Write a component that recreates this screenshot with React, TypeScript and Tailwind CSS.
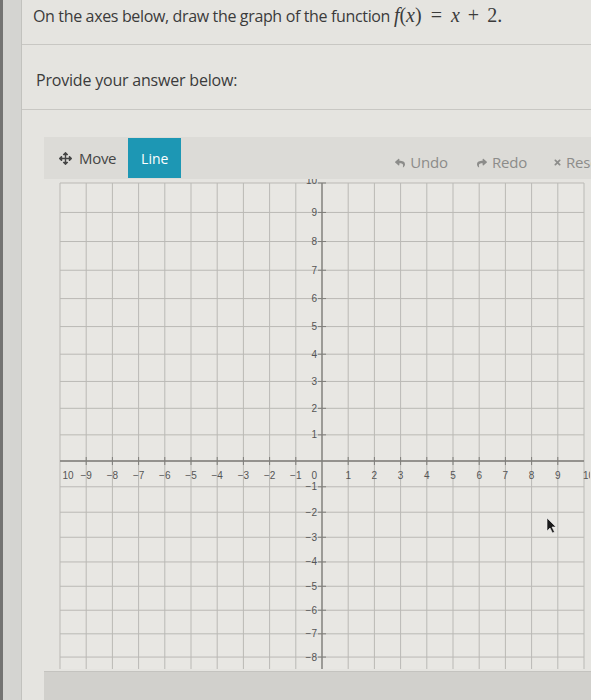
import React from "react";
import { FaArrowsAlt, FaReply, FaShare, FaTimes } from "react-icons/fa";

const OX = 45; // svg page offset x
const OY = 180; // svg page offset y
const W = 546;
const H = 492;

const xAt = (u: number) => 323 + 26.2 * u - OX;
const yAt = (v: number) => {
  const t = 10 - v;
  return 184 + 29.63 * t - 0.183 * t * t - OY;
};

function Grid() {
  const us = Array.from({ length: 21 }, (_, i) => i - 10);
  const vs = Array.from({ length: 19 }, (_, i) => 10 - i);
  const left = xAt(-10);
  const right = xAt(10);
  const top = yAt(10);
  const bottom = 490;
  const ax = xAt(0);
  const ay = yAt(0);
  return (
    <svg width={W} height={H} className="block" style={{ fontFamily: '"Liberation Sans", Arial, sans-serif' }}>
      <rect x={left} y={top} width={right - left} height={bottom - top} fill="#e8e7e3" />
      {us.map((u) => (
        <line key={"v" + u} x1={xAt(u)} x2={xAt(u)} y1={top} y2={bottom} stroke="#bab9b5" strokeWidth={1} />
      ))}
      {vs.map((v) => (
        <line key={"h" + v} x1={left} x2={right} y1={yAt(v)} y2={yAt(v)} stroke="#bab9b5" strokeWidth={1} />
      ))}
      <line x1={ax} x2={ax} y1={top} y2={bottom} stroke="#7f7e7a" strokeWidth={1.3} />
      <line x1={left} x2={right} y1={ay} y2={ay} stroke="#7f7e7a" strokeWidth={1.3} />
      {vs.filter((v) => v !== 0).map((v) => (
        <g key={"yl" + v}>
          <line x1={ax - 4} x2={ax + 4} y1={yAt(v)} y2={yAt(v)} stroke="#7f7e7a" strokeWidth={1} />
          <text x={ax - 5} y={v === 10 ? yAt(v) + 0.5 : yAt(v) + 3.5} textAnchor="end" fontSize={10} fill="#555">
            {v < 0 ? "\u2212" + Math.abs(v) : v}
          </text>
        </g>
      ))}
      {us.filter((u) => u !== 0 && u !== -10 && u !== 10).map((u) => (
        <g key={"xl" + u}>
          <line x1={xAt(u)} x2={xAt(u)} y1={ay - 4} y2={ay + 4} stroke="#7f7e7a" strokeWidth={1} />
          <text x={xAt(u)} y={ay + 18} textAnchor="middle" fontSize={10} fill="#555">
            {u < 0 ? "\u2212" + Math.abs(u) : u}
          </text>
        </g>
      ))}
      <text x={69 - OX} y={ay + 18} textAnchor="middle" fontSize={10} fill="#555">10</text>
      <text x={584 - OX} y={ay + 18} textAnchor="start" fontSize={10} fill="#555">10</text>
      <text x={ax - 5} y={ay + 18} textAnchor="end" fontSize={10} fill="#555">0</text>
      {/* cursor */}
      <path
        d={`M ${548 - OX} ${519 - OY} L ${548 - OX} ${532 - OY} L ${551 - OX} ${529 - OY} L ${553.5 - OX} ${534 - OY} L ${555.5 - OX} ${533 - OY} L ${553 - OX} ${528 - OY} L ${557 - OX} ${528 - OY} Z`}
        fill="#1a1a1a"
        stroke="#f2f2f2"
        strokeWidth={0.6}
      />
    </svg>
  );
}

const serif = { fontFamily: '"Liberation Serif", "Times New Roman", serif' };

export default function App() {
  return (
    <div
      className="w-[591px] h-[700px] flex overflow-hidden bg-[#d6d6d3] text-[#3b3b3b]"
      style={{ fontFamily: '"Open Sans", "Noto Sans", sans-serif' }}
    >
      <div className="w-[3px] bg-[#737372]" />
      <div className="w-[19px] bg-[#d4d4d1] border-r border-[#c2c2be]" />
      <div className="flex-1 flex flex-col bg-[#e5e4e0] min-w-0">
        <div className="h-[45px] border-b border-[#c8c7c3] pl-[11px] pt-[2px] flex items-start shrink-0">
          <p className="text-[16px] leading-[26px] whitespace-nowrap tracking-[-0.35px]">
            On the axes below, draw the graph of the function{" "}
            <span className="text-[20px] tracking-normal" style={serif}>
              <i>f</i>(<i>x</i>)<span className="mx-[9px]">=</span><i>x</i>
              <span className="mx-[8px]">+</span>2.
            </span>
          </p>
        </div>
        <div className="h-[65px] border-b border-[#c8c7c3] pl-[14px] pt-[22px] shrink-0">
          <p className="text-[16px] leading-[26px] whitespace-nowrap tracking-[-0.2px]">Provide your answer below:</p>
        </div>
        <div className="flex-1 flex flex-col pl-[22px] pt-[27px] min-h-0">
          <div className="h-[42px] bg-[#dcdbd7] flex items-center shrink-0">
            <div className="flex items-center pl-[15px] gap-[7px] text-[#454545]">
              <FaArrowsAlt size={13} />
              <span className="text-[15px] tracking-[-0.3px]">Move</span>
            </div>
            <div className="ml-[12px] h-[40px] w-[53px] bg-[#1d97b4] text-white text-[14px] flex items-center justify-center self-start mt-[1px]">
              Line
            </div>
            <div className="ml-auto flex items-center pt-[9px] text-[#8c8c8a] text-[15px] tracking-[-0.2px]">
              <div className="flex items-center gap-[5px] mr-[29px]">
                <FaReply size={10} />
                <span>Undo</span>
              </div>
              <div className="flex items-center gap-[5px] mr-[26px]">
                <FaShare size={10} />
                <span>Redo</span>
              </div>
              <div className="flex items-center gap-[4px] whitespace-nowrap w-[38px] overflow-hidden">
                <FaTimes size={9} className="shrink-0" />
                <span>Reset</span>
              </div>
            </div>
          </div>
          <div className="h-[492px] shrink-0">
            <Grid />
          </div>
          <div className="flex-1 bg-[#d1d0cc] border-t border-[#c4c3bf]" />
        </div>
      </div>
    </div>
  );
}
